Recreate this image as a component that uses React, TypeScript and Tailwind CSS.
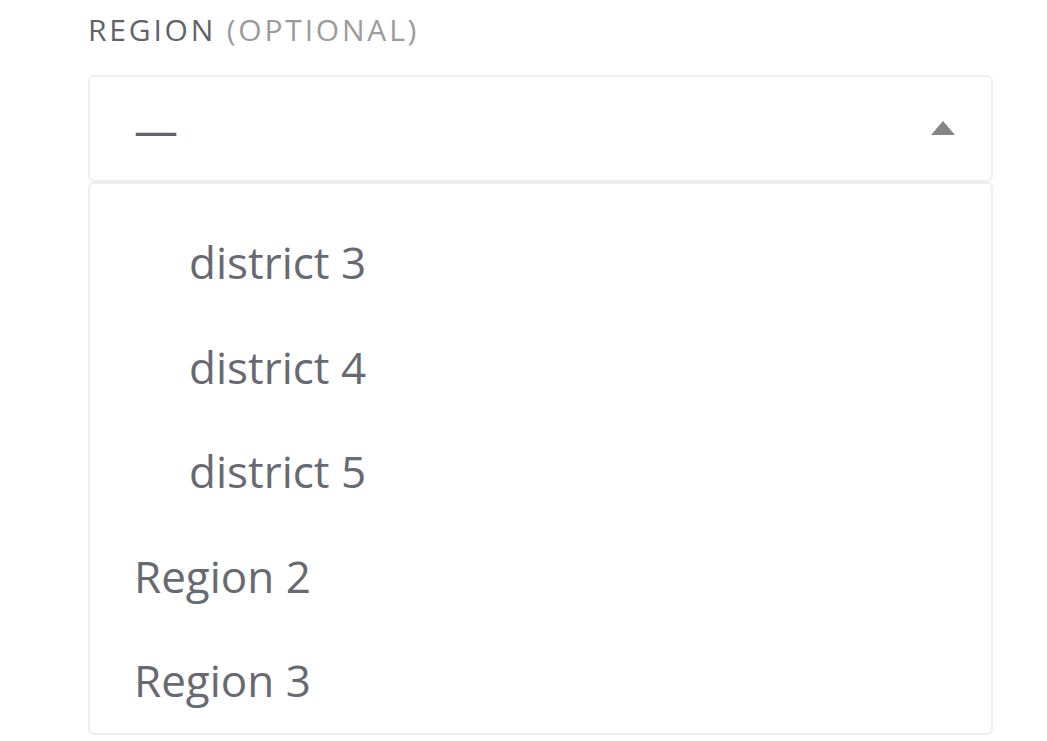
import { ReactNode } from 'react';

const options: { label: string; indent: boolean }[] = [
  { label: 'district 3', indent: true },
  { label: 'district 4', indent: true },
  { label: 'district 5', indent: true },
  { label: 'Region 2', indent: false },
  { label: 'Region 3', indent: false },
];

function Option({ children, indent }: { children: ReactNode; indent: boolean }) {
  return (
    <div
      className={
        'flex h-[104.5px] items-center text-[44px] text-[#676a72] ' +
        (indent ? 'pl-[99px]' : 'pl-[44px]')
      }
    >
      {children}
    </div>
  );
}

export default function App() {
  return (
    <div
      className="h-[741px] w-[1047px] overflow-hidden bg-white"
      style={{ fontFamily: '"Open Sans", "Noto Sans", sans-serif' }}
    >
      <div className="ml-[88px] w-[905px]">
        <div className="pt-[10px] text-[30px] leading-[40px] tracking-[2.8px]">
          <span className="text-[#5f636b]">REGION</span>{' '}
          <span className="text-[#9b9b9b]">(OPTIONAL)</span>
        </div>

        <div className="mt-[25px] flex h-[107px] items-center justify-between rounded-[6px] border-2 border-[#eeeeee] pl-[44px] pr-[36px]">
          <span className="text-[44px] leading-none text-[#5f636b]">—</span>
          <svg width="24" height="14" viewBox="0 0 24 14" className="mb-[2px]">
            <polygon points="12,0 24,14 0,14" fill="#858585" />
          </svg>
        </div>

        <div className="h-[553px] rounded-[6px] border-2 border-[#eeeeee] pt-[26px]">
          {options.map((o) => (
            <Option key={o.label} indent={o.indent}>
              {o.label}
            </Option>
          ))}
        </div>
      </div>
    </div>
  );
}
